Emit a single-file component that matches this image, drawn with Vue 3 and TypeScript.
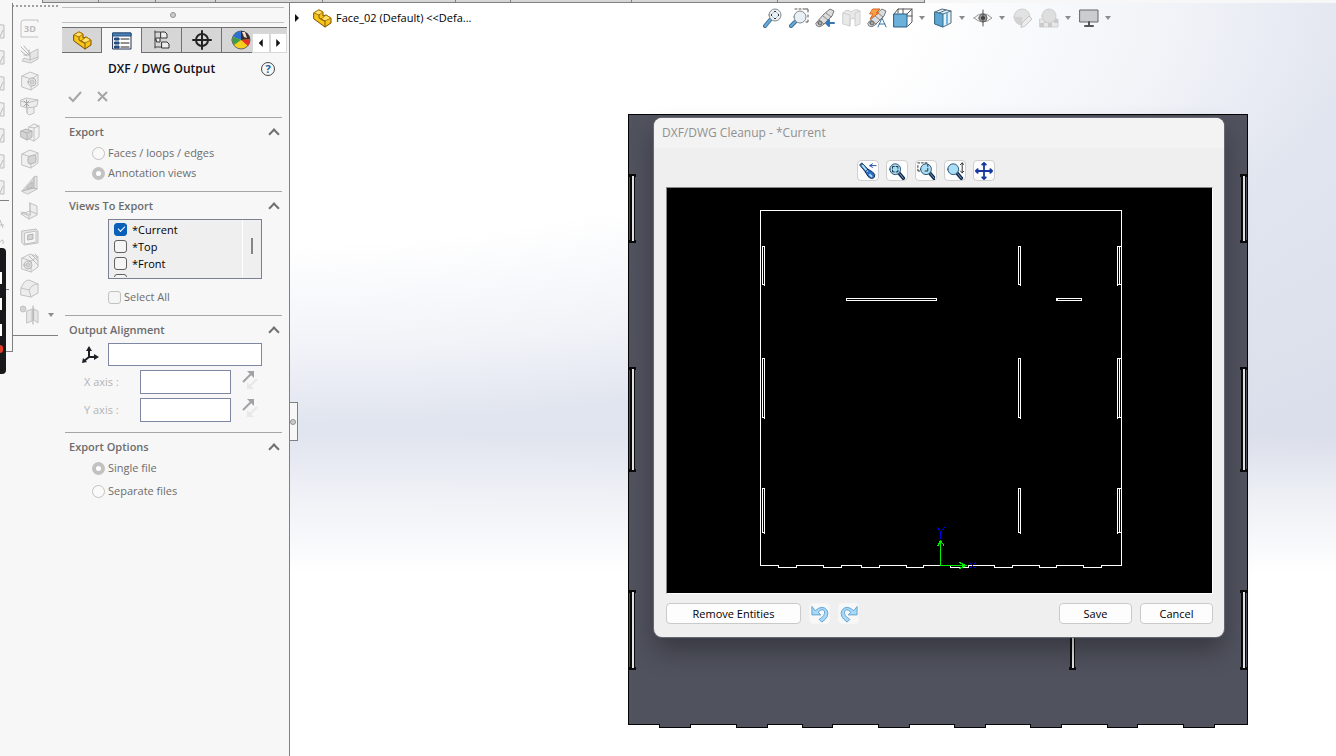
<script setup lang="ts">
import { h, ref } from 'vue'

type Shape = [d: string, fill?: string, stroke?: string, width?: number]

const Glyph = (props: { shapes: Shape[]; size?: number }) =>
  h(
    'svg',
    { width: props.size ?? 20, height: props.size ?? 20, viewBox: '0 0 20 20', 'aria-hidden': 'true', style: 'display:block;flex:none' },
    props.shapes.map(([d, fill, stroke, width]) =>
      h('path', { d, fill: fill ?? 'none', stroke: stroke ?? 'none', 'stroke-width': width ?? 1, 'stroke-linejoin': 'round', 'stroke-linecap': 'round' }),
    ),
  )
Glyph.props = ['shapes', 'size']

const circle = (x: number, y: number, r: number) => `M${x - r} ${y}a${r} ${r} 0 1 0 ${2 * r} 0a${r} ${r} 0 1 0 ${-2 * r} 0z`

const L = '#c2c2c2'
const F = '#e6e6e6'
const D = '#d4d4d4'
const cube: Shape[] = [
  ['M2 5L10 1L18 4V14L11 19L2 16Z', '#f0f0f0', L],
  ['M2 5L11 8L18 4M11 8V19', undefined, L],
]

const railIcons: { name: string; shapes: Shape[] }[] = [
  { name: 'Scene', shapes: [['M18 3V1H4Q1 1 1 4V18H18', undefined, L]] },
  { name: 'Convert', shapes: [['M10 8L18 4V14L11 18L2 16L4 13L10 15Z', F, L], ['M10 8V15L18 12', undefined, L], ['M1 2L9 10M4 1L9 7M1 6L7 11M9 5V10H4', undefined, '#b4b4b4', 1]] },
  { name: 'Hole', shapes: [...cube, [circle(12, 11, 4), F, '#b4b4b4'], [circle(12, 11, 2), D, L]] },
  { name: 'Pattern', shapes: [['M1 3L6 1L18 3L17 9L14 10V16L9 18L7 16V11L1 9Z', '#ededed', L], ['M1 4L7 6L18 3M7 6V16M7 11L14 10', undefined, L], ['M4 4L9 9M9 4L4 9M6.500 3V10', undefined, '#a8a8a8', 1]] },
  { name: 'Combine', shapes: [['M9 4L14 1L19 3V14L14 18L9 16Z', '#f3f3f3', L], ['M14 5V18M9 4L14 5L19 3', undefined, L], ['M1 8L6 6L12 8V14L7 17L1 14Z', D, '#b4b4b4'], ['M1 8L7 10L12 8M7 10V17', undefined, '#b4b4b4']] },
  { name: 'Shell', shapes: [...cube, ['M8 9Q8 7 10 7L14 6Q16 6 16 8V12Q16 14 14 14L10 15Q8 15 8 13Z', D, '#b4b4b4']] },
  { name: 'Rib', shapes: [['M2 16L14 2L17 1V14L8 19Z', F, L], ['M14 2V13L2 16M14 13L17 14M7 13L12 7V12Z', D, '#b4b4b4']] },
  { name: 'Bend', shapes: [['M10 2L17 5V14L9 18L1 13L3 11L10 14Z', '#ededed', L], ['M10 2V10L17 13M10 10L1 13M10 14V10M9 18V15L1 11', undefined, L]] },
  { name: 'Frame', shapes: [['M2 4L16 2L18 4V16L4 18L2 16Z', F, L], ['M5 6L16 4V15L5 17Z', '#f6f6f6', L], ['M8 8L13 7V12L8 13Z', D, '#b4b4b4']] },
  { name: 'Wizard', shapes: [...cube, [circle(8, 12, 4), F, '#b4b4b4'], [circle(8, 12, 2), D, L], ['M9 3L18 12M12 2L18 8M15 1L17 3', undefined, '#bababa', 1]] },
  { name: 'Dome', shapes: [['M1 9Q4 1 9 1L18 5V14L11 18L1 16Z', '#ededed', L], ['M1 9L9 11Q12 5 18 5M9 11L11 18', undefined, L]] },
  { name: 'Mirror', shapes: [[circle(3, 4, 3), D, L], ['M7 6L12 4V16L7 18ZM14 4L18 6V18L14 15Z', F, L], ['M13 1V19', undefined, '#a8a8a8']] },
]

const railEdge = [22, 48, 74, 100, 126, 152, 178]

const partIcon: Shape[] = [
  ['M2 5L7 2L11 4V8L14 7L19 10V15L13 19L2 11Z', '#f5c518', '#7a4a08', 1],
  ['M2 5L7 7L11 4L7 2ZM9 11L14 7L19 10L13 13Z', '#ffe26a', '#b07808', 1],
  ['M7 7V10L13 13V19', undefined, '#8a5a08', 1],
]
const tabIcons: { name: string; shapes: Shape[] }[] = [
  { name: 'Feature tree', shapes: partIcon },
  { name: 'Property manager', shapes: [['M1 2H19V18H1Z', '#fff', '#22314f', 1], ['M1 2H19V5H1Z', '#4a80b8', '#24507f'], ['M3 7H7V9H3ZM3 11H7V13H3ZM3 15H7V17H3Z', '#2b5fa8', '#1d3e70'], ['M9 8H17M9 12H17M9 16H17', undefined, '#222', 1]] },
  { name: 'Configurations', shapes: [['M3 1V18M3 2H8M3 10H8M3 17H10', undefined, '#444', 1], ['M9 2H13L15 4V8H9ZM10 12H15L17 14V18H10ZM4 8H8V12H5Z', '#eee', '#333', 1]] },
  { name: 'Dimensions', shapes: [[circle(10, 10, 6), undefined, '#222', 2], ['M10 1V19M1 10H19', undefined, '#222', 2]] },
  { name: 'Display', shapes: [[circle(10, 10, 9), '#f4cf1c', '#666'], ['M10 10L11 1A9 9 0 0 0 2 7Z', '#2f6fd0'], ['M10 10L2 7A9 9 0 0 0 3 15Z', '#3e9c46'], ['M10 10L19 9A9 9 0 0 1 17 16Z', '#e8332a'], ['M10 10L10 1A9 9 0 0 1 19 9Z', '#3a2a2a'], ['M11 2L14 2L16 8L13 7Z', '#f2dccc']] },
]

const glass = (x: number, y: number): Shape[] => [
  [`M${x - 5} ${y + 5}L2 18`, undefined, '#3c6f96', 4],
  [`M${x - 5} ${y + 5}L2 18`, undefined, '#68acd8', 2],
  [circle(x, y, 6), '#e9f0f5', '#85898d', 1],
]
const scope: Shape[] = [
  ['M1 15L9 6L15 1L19 3L17 8L8 17Q5 20 2 18Z', '#dcdcdc', '#777'],
  ['M11 5L16 9M8 8L13 12M4 12L9 16', undefined, '#888'],
  [circle(5, 15, 2), '#aaa', '#666'],
]
const viewTools: { name: string; shapes: Shape[]; menu?: boolean }[] = [
  { name: 'Zoom to fit', shapes: [...glass(12, 7), ['M11 4L12 3L13 4M11 10L12 11L13 10M9 6L8 7L9 8M15 6L16 7L15 8', undefined, '#333', 1]] },
  { name: 'Zoom to area', shapes: [['M6 1H8M10 1H12M14 1H19V4M19 7V9M19 12V14H17', undefined, '#555', 1], ...glass(11, 9)] },
  { name: 'Previous view', shapes: [...scope, ['M19 15H13M14 12L11 15L14 18Z', '#4a86bd', '#3a76b0', 2]] },
  { name: 'Section view', shapes: [['M2 5Q6 0 10 4Q15 0 19 3V16L14 18V11Q11 9 9 12V18L2 16Z', '#e9e9e9', '#cfcfcf'], ['M2 5L9 7V18M14 11V5L19 3', undefined, '#cfcfcf']] },
  { name: 'Annotation views', shapes: [...scope, ['M6 1H13L9 5H12L3 11L6 6H3Z', '#f7a53a', '#d8602a'], ['M11 19L15 10L19 19M12 16H18', undefined, '#3e78a8', 1]] },
  { name: 'View orientation', menu: true, shapes: [['M5 5V1H19V14L15 18M5 1L1 6M19 1L14 6M10 1V6M19 8H14', undefined, '#555'], ['M1 6H14V19H1Z', '#6cb1da', '#285a80']] },
  { name: 'Display style', menu: true, shapes: [['M2 4L9 1L18 3V15L10 19L2 16Z', '#e7f2f8', '#4d6c80'], ['M2 4L10 6V19L2 16Z', '#5ba6d2', '#3c6c8c'], ['M10 6L18 3M6 5L13 2', undefined, '#4d6c80'], ['M13 5L15 4V16L13 17Z', '#73b6dc']] },
  { name: 'Hide or show', menu: true, shapes: [['M1 10Q10 1 19 10Q10 18 1 10Z', '#f4f4f4', '#999'], [circle(10, 10, 4), '#999', '#666'], [circle(10, 10, 2), '#333'], ['M10 2V18', undefined, '#555']] },
  { name: 'Edit appearance', shapes: [[circle(9, 9, 8), '#e2e2e2', '#d0d0d0'], ['M9 9L1 9A8 8 0 0 0 9 17Z', '#d2d2d2'], ['M8 19L9 15L16 8L19 11L12 18Z', '#ededed', '#c4c4c4']] },
  { name: 'Apply scene', menu: true, shapes: [['M1 11H19V19H1Z', '#e8e8e8', '#d0d0d0'], ['M1 15H5V19H1ZM9 15H13V19H9ZM5 11H9V15H5ZM15 11H19V15H15Z', '#cacaca'], [circle(10, 8, 7), '#dedede', '#cfcfcf']] },
  { name: 'View settings', menu: true, shapes: [['M1 2H19V14H1Z', '#c9cdcf', '#666', 1], ['M10 14V18M6 18H14', undefined, '#555', 2]] },
]

const blueGlass = (x: number, y: number): Shape[] => [
  [`M${x + 4} ${y + 4}L${x + 9} 18`, undefined, '#142848', 4],
  [`M${x + 5} ${y + 5}L${x + 9} 18`, undefined, '#7db4dc', 1],
  [circle(x, y, 6), '#a9def5', '#1d4a70', 1],
]
const dialogTools: { name: string; shapes: Shape[] }[] = [
  { name: 'Previous', shapes: [['M1 3L3 1L10 8L15 11Q19 14 17 17Q14 20 10 16L7 11Z', '#2a70c8', '#102040'], ['M4 4L9 10M12 14L14 16', undefined, '#aee2ff', 2], ['M10 8L7 11', undefined, '#102040'], ['M19 4H12M15 2L12 4L15 6', undefined, '#1540a0', 1]] },
  { name: 'Fit', shapes: [...blueGlass(8, 8), ['M5 7V5H7M9 5H11V7M11 9V11H9M7 11H5V9', undefined, '#102030']] },
  { name: 'Area', shapes: [...blueGlass(10, 8), ['M1 1H3M5 1H7M9 1H11M1 4V6M1 8V10H3M12 3V5M12 7V10H9', undefined, '#222', 1]] },
  { name: 'Zoom', shapes: [...blueGlass(8, 8), ['M18 1V12M16 3L18 1L20 3M16 10L18 12L20 10', undefined, '#222', 1]] },
  { name: 'Pan', shapes: [['M10 1V19M1 10H19M8 3L10 1L12 3M8 17L10 19L12 17M3 8L1 10L3 12M17 8L19 10L17 12', undefined, '#1538a0', 2]] },
]
const undo: Shape[] = [['M1 2V11H11L8 8Q13 3 15 7Q16 12 9 16L12 19Q21 13 18 6Q13 -1 5 6Z', '#a9d8f5', '#5c9fd0', 1]]
const redo: Shape[] = [['M19 2V11H9L12 8Q7 3 5 7Q4 12 11 16L8 19Q-1 13 2 6Q7 -1 15 6Z', '#a9d8f5', '#5c9fd0', 1]]

const exportMode = ref('views')
const fileMode = ref('single')
const views = ref([
  { label: '*Current', on: true },
  { label: '*Top', on: false },
  { label: '*Front', on: false },
])

const notched = (x0: number, x1: number, top: number, base: number, depth: number, notches: number[][]) =>
  `M${x0} ${top}V${base}` + notches.map(([a, b]) => `H${a}V${base + depth}H${b}V${base}`).join('') + `H${x1}V${top}Z`

const plate = notched(2, 621, 2, 612, 3, [[33, 64], [110, 141], [176, 206], [252, 283], [328, 359], [404, 435], [481, 511], [557, 588]])
const plateSlots = [
  [6, 63, 130], [6, 256, 359], [6, 479, 557],
  [617, 63, 130], [617, 256, 359], [617, 479, 557], [446, 479, 557],
]
const sheet = notched(94, 455, 22, 377, 2, [[112, 130], [157, 175], [195, 213], [240, 257], [284, 302], [328, 346], [373, 390], [417, 435]])
const spans = [[58, 96], [170, 229], [300, 344]]
const sheetSlots = spans
  .map(([a, b]) =>
    `M96 ${a}V${b}M98 ${a - 1}V${b + 1}M95 ${a}H98M95 ${b}H98` +
    `M352 ${a}V${b}M354 ${a - 1}V${b + 1}M351 ${a}H354M351 ${b}H354` +
    `M451 ${a - 1}V${b + 1}M453 ${a}V${b}M451 ${a}H455M451 ${b}H455`)
  .join('')
</script>

<template>
  <div class="app">
    <div class="ribbon"><i v-for="n in 9" :key="n"></i></div>
    <div class="work">
      <aside class="edge-rail">
        <div class="edge-icons">
          <svg width="12" height="348" viewBox="0 0 12 348" aria-hidden="true">
            <path v-for="y in railEdge" :key="y" :d="`M-2 ${y - 2}L1 ${y}H4V${y + 13}H-2M0 ${y + 12}L3 ${y + 5}`" fill="#f0f0f0" stroke="#bdbdbd" />
            <path d="M0 197.5H9" stroke="#808080" />
            <path d="M0 217L3 225M0 222H4M0 239Q4 234 3 241" fill="none" stroke="#bdbdbd" />
            <path d="M6 286.500H9" stroke="#808080" />
          </svg>
        </div>
        <div class="recorder"><b></b><b></b><b></b><em></em></div>
      </aside>
      <nav class="tool-rail" aria-label="Features">
        <button v-for="(icon, i) in railIcons" :key="icon.name" type="button" disabled :aria-label="icon.name">
          <Glyph :shapes="icon.shapes" />
          <span v-if="i === 0" class="three-d">3D</span>
          <i v-if="i === 11" class="caret"></i>
        </button>
      </nav>

      <section class="panel">
        <div class="grip"><i class="dot"></i></div>
        <div class="tabs">
          <button v-for="(tab, i) in tabIcons" :key="tab.name" type="button" :class="['tab', { active: i === 1 }]" :aria-label="tab.name">
            <Glyph :shapes="tab.shapes" />
          </button>
          <div class="tab-more">
            <button type="button" aria-label="Scroll left"><i class="tri left"></i></button>
            <button type="button" aria-label="Scroll right"><i class="tri right"></i></button>
          </div>
        </div>
        <header class="title">
          <h1>DXF / DWG Output</h1>
          <button type="button" class="help">?</button>
        </header>
        <div class="confirm">
          <button type="button" aria-label="OK"><svg width="16" height="14" viewBox="0 0 16 14"><path d="M2 7L6 11L14 2" fill="none" stroke="#a6a6a6" stroke-width="2" /></svg></button>
          <button type="button" aria-label="Close"><svg width="16" height="14" viewBox="0 0 16 14"><path d="M3 2L12 11M12 2L3 11" stroke="#a6a6a6" stroke-width="2" /></svg></button>
        </div>

        <section class="group">
          <h2>Export<i class="chevron"></i></h2>
          <div class="choices">
            <label><input v-model="exportMode" type="radio" name="mode" value="faces" disabled>Faces / loops / edges</label>
            <label><input v-model="exportMode" type="radio" name="mode" value="views" disabled>Annotation views</label>
          </div>
        </section>

        <section class="group">
          <h2>Views To Export<i class="chevron"></i></h2>
          <div class="list">
            <div class="rows">
              <label v-for="view in views" :key="view.label"><input v-model="view.on" type="checkbox">{{ view.label }}</label>
              <label><input type="checkbox" aria-label="Next view"></label>
            </div>
            <div class="scroll"><i></i></div>
          </div>
          <label class="all"><input type="checkbox" disabled>Select All</label>
        </section>

        <section class="group">
          <h2>Output Alignment<i class="chevron"></i></h2>
          <div class="origin">
            <svg width="20" height="20" viewBox="0 0 20 20" aria-hidden="true">
              <path d="M9 3V12H17M9 12L4 16" fill="none" stroke="#1d1f26" stroke-width="2" />
              <path d="M9 1L12 6H6ZM19 12L14 9V15ZM2 18L3 13L7 17Z" fill="#1d1f26" />
            </svg>
            <input type="text" aria-label="Origin">
          </div>
          <div v-for="axis in ['X', 'Y']" :key="axis" class="axis">
            <label :for="`axis-${axis}`">{{ axis }} axis :</label>
            <input :id="`axis-${axis}`" type="text">
            <button type="button" disabled :aria-label="`Reverse ${axis}`">
              <svg width="18" height="20" viewBox="0 0 18 20">
                <path d="M2 12L10 4" stroke="#a2a2a6" stroke-width="2" /><path d="M6 1H13V8Z" fill="#a2a2a6" />
                <path d="M16 9L9 16" stroke="#e8e8e8" stroke-width="2" /><path d="M6 12V19H13Z" fill="#e8e8e8" />
              </svg>
            </button>
          </div>
        </section>

        <section class="group">
          <h2>Export Options<i class="chevron"></i></h2>
          <div class="choices wide">
            <label><input v-model="fileMode" type="radio" name="file" value="single" disabled>Single file</label>
            <label><input v-model="fileMode" type="radio" name="file" value="separate" disabled>Separate files</label>
          </div>
        </section>
      </section>

      <main class="viewport">
        <button type="button" class="splitter" aria-label="Collapse panel"><i class="dot"></i></button>
        <header class="view-head">
          <div class="tree">
            <i class="tri right"></i>
            <Glyph :shapes="partIcon" />
            <span>Face_02 (Default) &lt;&lt;Defa...</span>
          </div>
          <div class="view-tools">
            <template v-for="tool in viewTools" :key="tool.name">
              <button type="button" :aria-label="tool.name"><Glyph :shapes="tool.shapes" /></button>
              <i v-if="tool.menu" class="caret"></i>
            </template>
          </div>
        </header>

        <div class="stage">
          <svg class="plate" viewBox="0 0 624 618" shape-rendering="crispEdges" aria-hidden="true">
            <path :d="plate" transform="translate(.5 .5)" fill="#50525e" stroke="#050505" />
            <g v-for="([x, a, b], i) in plateSlots" :key="i">
              <rect :x="x - 2" :y="a" width="5" :height="b - a" fill="#0a0a0c" />
              <rect :x="x - 3" :y="a - 1" width="7" height="3" fill="#0a0a0c" />
              <rect :x="x - 3" :y="b - 2" width="7" height="3" fill="#0a0a0c" />
              <rect :x="x" :y="a + 1" width="2" :height="b - a - 2" fill="#e4e4e2" />
            </g>
          </svg>

          <section class="dialog" role="dialog" aria-labelledby="dialog-title">
            <h2 id="dialog-title">DXF/DWG Cleanup - *Current</h2>
            <div class="dialog-tools">
              <button v-for="tool in dialogTools" :key="tool.name" type="button" :aria-label="tool.name"><Glyph :shapes="tool.shapes" :size="18" /></button>
            </div>
            <div class="preview">
              <svg viewBox="1 0 545 405" shape-rendering="crispEdges" aria-hidden="true">
                <g transform="translate(.5 .5)" fill="none" stroke="#fff">
                  <path :d="sheet" />
                  <path :d="sheetSlots" />
                  <path d="M180 109V112M270 109V112M180 110H270M180 112H270M390 109V112M391 109V112M415 109V112M390 110H415M390 112H415" />
                  <path d="M274 377V352M274 377H299" stroke="#00f000" />
                  <path d="M271 358L274 352L278 358M293 374L299 377L293 380" stroke="#00f000" />
                  <path d="M271 339L274 343L278 339M274 343V350M303 374L309 380M309 374L303 380" stroke="#0000e8" />
                </g>
              </svg>
            </div>
            <footer>
              <button type="button" class="remove">Remove Entities</button>
              <button type="button" class="history" aria-label="Undo"><Glyph :shapes="undo" :size="18" /></button>
              <button type="button" class="history" aria-label="Redo"><Glyph :shapes="redo" :size="18" /></button>
              <button type="button" class="end">Save</button>
              <button type="button">Cancel</button>
            </footer>
          </section>
        </div>
      </main>
    </div>
  </div>
</template>

<style>
body { margin: 0; overflow: hidden; }
</style>

<style scoped>
* { box-sizing: border-box; }
.app {
  display: flex;
  flex-direction: column;
  min-height: 100vh;
  background: #f7f7f7;
  color: #000;
  font: 11px/16px "Open Sans", "Noto Sans", sans-serif;
}
button { padding: 0; border: 0; background: none; font: inherit; color: inherit; }
input { margin: 0; font: inherit; }
h1, h2 { margin: 0; font-size: 11px; line-height: 16px; }
svg { display: block; flex: none; }

.ribbon { display: grid; grid-template-columns: 56fr 57fr 60fr 107fr 133fr 56fr 121fr 146fr 147fr; height: 3px; margin-left: 42px; width: 883px; background: #d6d6d6; border: solid #808080; border-width: 0 1px 1px 0; }
.ribbon i { border-left: 1px solid #808080; }
.work { display: flex; flex: 1; }

.edge-rail { position: relative; width: 13px; height: 349px; flex: none; border-right: 1px solid #808080; border-bottom: 1px solid #808080; }
.edge-icons { overflow: hidden; }
.recorder { position: absolute; left: 0; top: 245px; width: 6px; height: 126px; padding-top: 24px; background: #18181a; border-radius: 0 4px 4px 0; }
.recorder b { display: block; width: 2px; height: 12px; margin-bottom: 14px; background: #fff; }
.recorder em { display: block; width: 3px; height: 8px; margin-top: -5px; background: #e03c28; border-radius: 0 4px 4px 0; }

.tool-rail { display: flex; flex-direction: column; gap: 6px; width: 45px; height: 333px; flex: none; padding: 16px 0 0 7px; border-bottom: 1px solid #808080; background: linear-gradient(90deg, #a0a0a0 50%, transparent 50%) 3px 2px / 4px 2px repeat-x; }
.tool-rail button { position: relative; display: flex; align-items: center; gap: 8px; width: 34px; height: 20px; }
.three-d { position: absolute; left: 4px; top: 2px; font: bold 9px/16px "Open Sans", sans-serif; color: #bcbcbc; }
.caret { flex: none; width: 6px; height: 4px; background: #8c8c8c; clip-path: polygon(0 0, 100% 0, 50% 100%); }

.panel { width: 232px; flex: none; padding-left: 4px; border-right: 1px solid #808080; color: #6d6d6d; }
.grip { display: flex; justify-content: center; align-items: center; height: 16px; margin: 4px 5px 4px 0; border: solid #c0c0c0; border-width: 1px 0; }
.dot { width: 6px; height: 6px; border: 1px solid #909090; border-radius: 50%; background: #ccc; }
.tabs { display: flex; height: 26px; margin-right: 2px; border-top: 1px solid #707070; overflow: hidden; }
.tab { display: grid; place-items: center; width: 40px; flex: none; border: solid #707070; border-width: 0 1px 1px 0; background: #d6d6d6; }
.tab.active { background: #f7f7f7; border-bottom: 0; }
.tab:nth-child(5) { width: 30px; padding-left: 9px; justify-items: start; border-right: 0; overflow: hidden; }
.tab-more { display: flex; flex: 1; padding-top: 5px; background: #d6d6d6; }
.tab-more button { display: grid; flex: 1; place-items: center; border: 1px solid #d8d8d8; background: #fff; }
.tri { width: 4px; height: 8px; background: #111; }
.tri.right { clip-path: polygon(0 0, 100% 50%, 0 100%); }
.tri.left { clip-path: polygon(100% 0, 0 50%, 100% 100%); }

.title { display: flex; align-items: center; height: 32px; padding: 0 14px 0 46px; color: #10101c; }
.title h1 { flex: 1; font-size: 12px; font-weight: 600; }
.help { width: 14px; height: 14px; border: 1px solid #444; border-radius: 50%; color: #1c5fa0; font-weight: 700; line-height: 12px; }
.confirm { display: flex; gap: 12px; height: 32px; padding: 5px 0 0 5px; align-items: flex-start; }

.group { position: relative; margin: 0 7px 0 3px; border-top: 1px solid #a6a6a6; height: 74px; padding-top: 6px; }
.group:nth-of-type(2) { height: 124px; }
.group:nth-of-type(3) { height: 117px; }
.group h2 { display: flex; justify-content: space-between; align-items: center; padding: 0 4px; color: #6c6c6c; font-weight: 600; }
.chevron { width: 8px; height: 8px; margin: 4px 0 0; border: solid #707070; border-width: 2px 0 0 2px; transform: rotate(45deg); }
.choices { display: flex; flex-direction: column; gap: 4px; padding: 5px 0 0 27px; }
.choices.wide { gap: 7px; }
label { display: flex; align-items: center; }
input[type="radio"] { appearance: none; width: 13px; height: 13px; margin-right: 3px; border: 1px solid #c2c2c2; border-radius: 50%; background: #fafafa; }
input[type="radio"]:checked { border: 4px solid #c2c2c2; background: #fff; }
input[type="checkbox"] { appearance: none; width: 13px; height: 13px; margin-right: 5px; flex: none; border: 1px solid #606060; border-radius: 3px; background: #f5f5f5; }
input[type="checkbox"]:checked { border-color: #0a5fb8; background: #0a5fb8; }
label:has(input[type="checkbox"]:checked) { position: relative; }
label:has(input[type="checkbox"]:checked)::before { content: ""; position: absolute; left: 4px; top: 5px; width: 6px; height: 3px; border: solid #fff; border-width: 0 0 1px 1px; transform: rotate(-45deg); }
.list { display: flex; height: 60px; margin: 5px 20px 0 43px; border: 1px solid #7c8090; background: #efefef; overflow: hidden; color: #000; }
.rows { flex: 1; height: 57px; padding: 1px 0 0 5px; overflow: hidden; border-right: 1px solid #fff; }
.rows label { height: 17px; }
.scroll { display: grid; place-items: center; width: 18px; padding-bottom: 6px; }
.scroll i { width: 2px; height: 16px; background: #858585; }
.all { margin: 10px 0 0 43px; }
.all input[type="checkbox"] { margin-right: 3px; border-color: #c2c2c2; }

input[type="text"] { min-width: 0; border: 1px solid #7e88a2; background: #fff; }
.origin { display: flex; align-items: center; gap: 8px; margin: 5px 20px 0 15px; }
.origin input { flex: 1; height: 23px; }
.axis { display: flex; align-items: center; height: 24px; margin: 4px 20px 0 19px; color: #b4b4b4; }
.axis label { width: 56px; }
.axis input { width: 91px; height: 24px; }
.axis button { margin: -4px 0 0 10px; }

.viewport {
  position: relative;
  flex: 1;
  min-width: 0;
  overflow: hidden;
  background:
    linear-gradient(#fff0 430px, #ffffff80 490px, #fff 570px),
    radial-gradient(ellipse 770px 300px at 0 0, #fff 80%, #f1f3f8 115%, #e1e5ef 140%, #dadeea 200%);
}
.splitter { position: absolute; left: -1px; top: 399px; width: 9px; height: 39px; display: grid; place-items: center; border: 1px solid #808080; border-left: 0; background: #f7f7f7; }
.view-head { display: grid; grid-template-columns: 473px auto; align-items: center; height: 30px; }
.tree { display: flex; align-items: center; padding-left: 5px; color: #000; }
.tree svg { margin: 0 4px 0 13px; }
.view-tools { display: flex; align-items: center; gap: 6px; }
.view-tools .caret { margin-right: 2px; }

.stage { position: absolute; left: 336px; top: 109px; width: 624px; }
.plate { width: 100%; }
.dialog { position: absolute; left: 28px; right: 26px; top: 6px; border-radius: 8px; background: #efefef; padding: 0 11px 13px 12px; box-shadow: 0 0 1px 1px #6a6c76, 0 14px 26px #00000050; }
.dialog h2 { margin: 0 -11px 0 -12px; padding: 7px 8px; border-radius: 8px 8px 0 0; background: #f3f3f3; color: #909090; font-weight: 400; font-size: 12px; }
.dialog-tools { display: flex; justify-content: center; gap: 7px; padding: 12px 28px 6px 0; }
.dialog-tools button { display: grid; place-items: center; width: 22px; height: 21px; border: 1px solid #cfcfcf; border-radius: 4px; background: #fdfdfd; }
.preview { border: 1px solid #fff; border-top-color: #888; border-left-color: #888; background: #000; }
.preview svg { width: 100%; }
footer { display: flex; align-items: center; gap: 8px; margin-top: 9px; }
footer button { width: 73px; height: 21px; border: 1px solid #cacaca; border-radius: 4px; background: #fdfdfd; }
footer .remove { width: 135px; }
footer .history { display: grid; place-items: center; width: 21px; border-color: #f6f6f6; background: #f8f8f8; }
footer .end { margin-left: auto; }
</style>
